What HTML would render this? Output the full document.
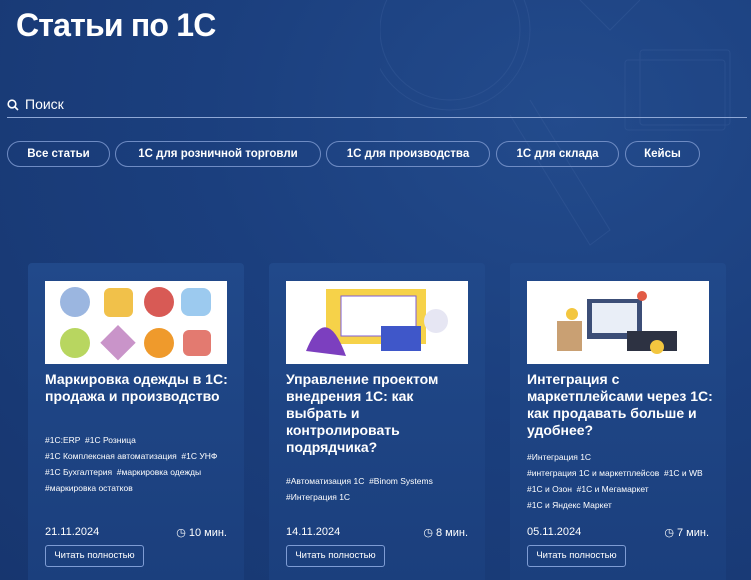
<!DOCTYPE html>
<html style="background:#17366f"><head><meta charset="utf-8"><style>
*{margin:0;padding:0;box-sizing:border-box}
html,body{width:751px;height:580px;overflow:hidden}
body{font-family:"Liberation Sans",sans-serif;color:#fff;
background:radial-gradient(ellipse at 75% 20%,#234b8c 0%,#1b3f7e 45%,#17366f 100%);position:relative}
h1{position:absolute;left:16px;top:7px;font-size:32px;font-weight:bold;letter-spacing:-0.8px}
.search{position:absolute;left:7px;top:96px;width:740px;height:22px;border-bottom:1px solid #8fa8d6;font-size:14px}
.search span{position:absolute;left:18px;top:0}
.chip{position:absolute;top:141px;height:26px;border:1px solid #6f8cc4;border-radius:13px;font-size:11.5px;font-weight:bold;line-height:24px;text-align:center}
.card{position:absolute;top:263px;width:216px;height:317px;border-radius:4px 4px 0 0;background:linear-gradient(#21498a,#1b3f7d)}
.img{position:absolute;left:17px;top:18px;width:182px;height:83px;background:#fff}
.t{position:absolute;left:17px;top:108px;width:190px;font-size:14px;font-weight:bold;line-height:17px}
.tags{position:absolute;left:17px;width:195px;font-size:8.5px;line-height:16px}
.d{position:absolute;left:17px;top:263px;font-size:11px}
.m{position:absolute;right:17px;top:263px;font-size:11px}
.b{position:absolute;left:17px;top:282px;width:99px;height:22px;border:1px solid #7e9cd4;border-radius:3px;font-size:9.5px;line-height:20px;text-align:center}
</style></head><body>
<svg style="position:absolute;left:380px;top:0" width="371" height="250" fill="none" stroke="#3a5e9c" stroke-width="1" opacity=".4">
<circle cx="70" cy="30" r="80"/><circle cx="70" cy="30" r="70"/>
<path d="M150 100 L230 230 L210 245 L130 115"/>
<rect x="245" y="60" width="100" height="70" rx="3"/><rect x="260" y="50" width="90" height="75" rx="3"/>
<path d="M200 0 L230 30 L260 0"/>
</svg>
<h1>Статьи по 1С</h1>
<div class="search"><svg width="12" height="12" style="position:absolute;left:0;top:3px" fill="none" stroke="#fff" stroke-width="1.6"><circle cx="5" cy="5" r="3.8"/><path d="M8 8l3 3"/></svg><span>Поиск</span></div>
<div class="chip" style="left:7px;width:103px">Все статьи</div>
<div class="chip" style="left:115px;width:206px">1С для розничной торговли</div>
<div class="chip" style="left:326px;width:164px">1С для производства</div>
<div class="chip" style="left:496px;width:123px">1С для склада</div>
<div class="chip" style="left:625px;width:75px">Кейсы</div>

<div class="card" style="left:28px">
<div class="img"><svg width="182" height="83">
<circle cx="30" cy="21" r="15" fill="#9bb6e0"/><rect x="59" y="7" width="29" height="29" rx="6" fill="#f1c14a"/><circle cx="114" cy="21" r="15" fill="#d85a55"/><rect x="136" y="7" width="30" height="28" rx="8" fill="#9ccaef"/>
<circle cx="30" cy="62" r="15" fill="#b8d660"/><rect x="61" y="49" width="25" height="25" transform="rotate(45 73 61)" fill="#c994c9"/><circle cx="114" cy="62" r="15" fill="#ef9a2c"/><rect x="138" y="49" width="28" height="26" rx="6" fill="#e37a70"/>
</svg></div>
<div class="t">Маркировка одежды в 1С: продажа и производство</div>
<div class="tags" style="top:169px">#1С:ERP &nbsp;#1С Розница<br>#1С Комплексная автоматизация &nbsp;#1С УНФ<br>#1С Бухгалтерия &nbsp;#маркировка одежды<br>#маркировка остатков</div>
<div class="d">21.11.2024</div><div class="m">&#9719; 10 мин.</div>
<div class="b">Читать полностью</div></div>

<div class="card" style="left:269px">
<div class="img"><svg width="182" height="83"><rect x="40" y="8" width="100" height="55" fill="#f6d249"/><rect x="55" y="15" width="75" height="40" fill="#fff" stroke="#7d5cd6"/><path d="M20 70 Q40 20 60 75" fill="#7c3fbf"/><rect x="95" y="45" width="40" height="25" fill="#3f57c9"/><circle cx="150" cy="40" r="12" fill="#e6e6f3"/></svg></div>
<div class="t">Управление проектом внедрения 1С: как выбрать и контролировать подрядчика?</div>
<div class="tags" style="top:210px">#Автоматизация 1С &nbsp;#Binom Systems<br>#Интеграция 1С</div>
<div class="d">14.11.2024</div><div class="m">&#9719; 8 мин.</div>
<div class="b">Читать полностью</div></div>

<div class="card" style="left:510px">
<div class="img"><svg width="182" height="83"><rect x="60" y="18" width="55" height="40" fill="#3c4e77"/><rect x="65" y="22" width="45" height="30" fill="#e9eef7"/><rect x="30" y="40" width="25" height="30" fill="#c9a073"/><rect x="100" y="50" width="50" height="20" fill="#2d3242"/><circle cx="45" cy="33" r="6" fill="#f3c63f"/><circle cx="130" cy="66" r="7" fill="#f3c63f"/><circle cx="115" cy="15" r="5" fill="#e25b45"/></svg></div>
<div class="t">Интеграция с маркетплейсами через 1С: как продавать больше и удобнее?</div>
<div class="tags" style="top:186px">#Интеграция 1С<br>#интеграция 1С и маркетплейсов &nbsp;#1С и WB<br>#1С и Озон &nbsp;#1С и Мегамаркет<br>#1С и Яндекс Маркет</div>
<div class="d">05.11.2024</div><div class="m">&#9719; 7 мин.</div>
<div class="b">Читать полностью</div></div>
</body></html>
